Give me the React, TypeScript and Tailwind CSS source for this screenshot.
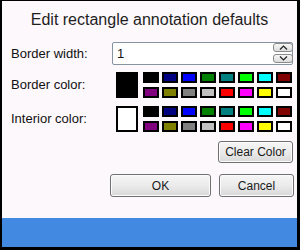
import React from "react";

const topColors = ["#000000", "#000080", "#0000ff", "#008000", "#008080", "#00ff00", "#00ffff", "#800000"];
const bottomColors = ["#800080", "#808000", "#808080", "#c0c0c0", "#ff0000", "#ff00ff", "#ffff00", "#ffffff"];

const btn =
	"flex items-center justify-center rounded-[3px] border border-[#707070] bg-linear-to-b from-[#f6f6f6] via-[#ebebeb] to-[#d8d8d8] text-[12px] text-[#1a1a1a] shadow-[inset_0_0_0_1px_#fcfcfc]";

function SpinButton({ up }: { up?: boolean }) {
	return (
		<div className="flex h-[9px] w-[20px] items-center justify-center rounded-[3px] border border-[#8a8a8a] bg-linear-to-b from-[#f7f7f7] to-[#dcdcdc]">
			<svg width="9" height="5" viewBox="0 0 9 5">
				<polyline
					points={up ? "1,4.5 4.5,1 8,4.5" : "1,0.5 4.5,4 8,0.5"}
					fill="none"
					stroke="#222"
					strokeWidth="1.2"
				/>
			</svg>
		</div>
	);
}

function Palette({ current }: { current: string }) {
	return (
		<div className="ml-[4px] flex items-start">
			<div className="h-[26px] w-[22px] border-2 border-black" style={{ background: current }} />
			<div className="ml-[5px] grid grid-cols-[repeat(8,16px)] gap-x-[3px] gap-y-[4px]">
				{[...topColors, ...bottomColors].map((c, i) => (
					<div key={i} className="h-[11px] w-[16px] border-2 border-black" style={{ background: c }} />
				))}
			</div>
		</div>
	);
}

export default function App() {
	return (
		<div className="flex h-[250px] w-[300px] flex-col border-t border-r-[3px] border-b-[3px] border-l-2 border-black bg-[#fdf8fc] font-['Liberation_Sans',Arial,sans-serif] text-[#111]">
			<div className="mt-[9px] h-[20px] text-center text-[16px] leading-[20px] text-[#1e1e1e]">
				Edit rectangle annotation defaults
			</div>

			<div className="mt-[12px] flex items-center pl-[9px]">
				<span className="w-[101px] text-[13px] leading-[16px]">Border width:</span>
				<div className="relative flex h-[23px] w-[181px] items-center rounded-[2px] border border-[#8593a2] bg-white pl-[4px] text-[13px]">
					1
					<div className="absolute top-0 right-[-1px] flex h-full flex-col justify-between pb-[1px]">
						<SpinButton up />
						<SpinButton />
					</div>
				</div>
			</div>

			<div className="mt-[7px] flex items-center pl-[9px]">
				<span className="w-[101px] text-[13px] leading-[16px]">Border color:</span>
				<Palette current="#000000" />
			</div>

			<div className="mt-[8px] flex items-center pl-[9px]">
				<span className="w-[101px] text-[13px] leading-[16px]">Interior color:</span>
				<Palette current="#ffffff" />
			</div>

			<div className="mt-[9px] flex justify-end pr-[4px]">
				<button className={`${btn} h-[22px] w-[75px]`}>Clear Color</button>
			</div>

			<div className="mt-[11px] flex justify-end gap-[8px] pr-[3px]">
				<button className={`${btn} h-[23px] w-[101px]`}>OK</button>
				<button className={`${btn} h-[23px] w-[75px]`}>Cancel</button>
			</div>

			<div className="mt-auto h-[29px] bg-[#4289e1]" />
		</div>
	);
}
